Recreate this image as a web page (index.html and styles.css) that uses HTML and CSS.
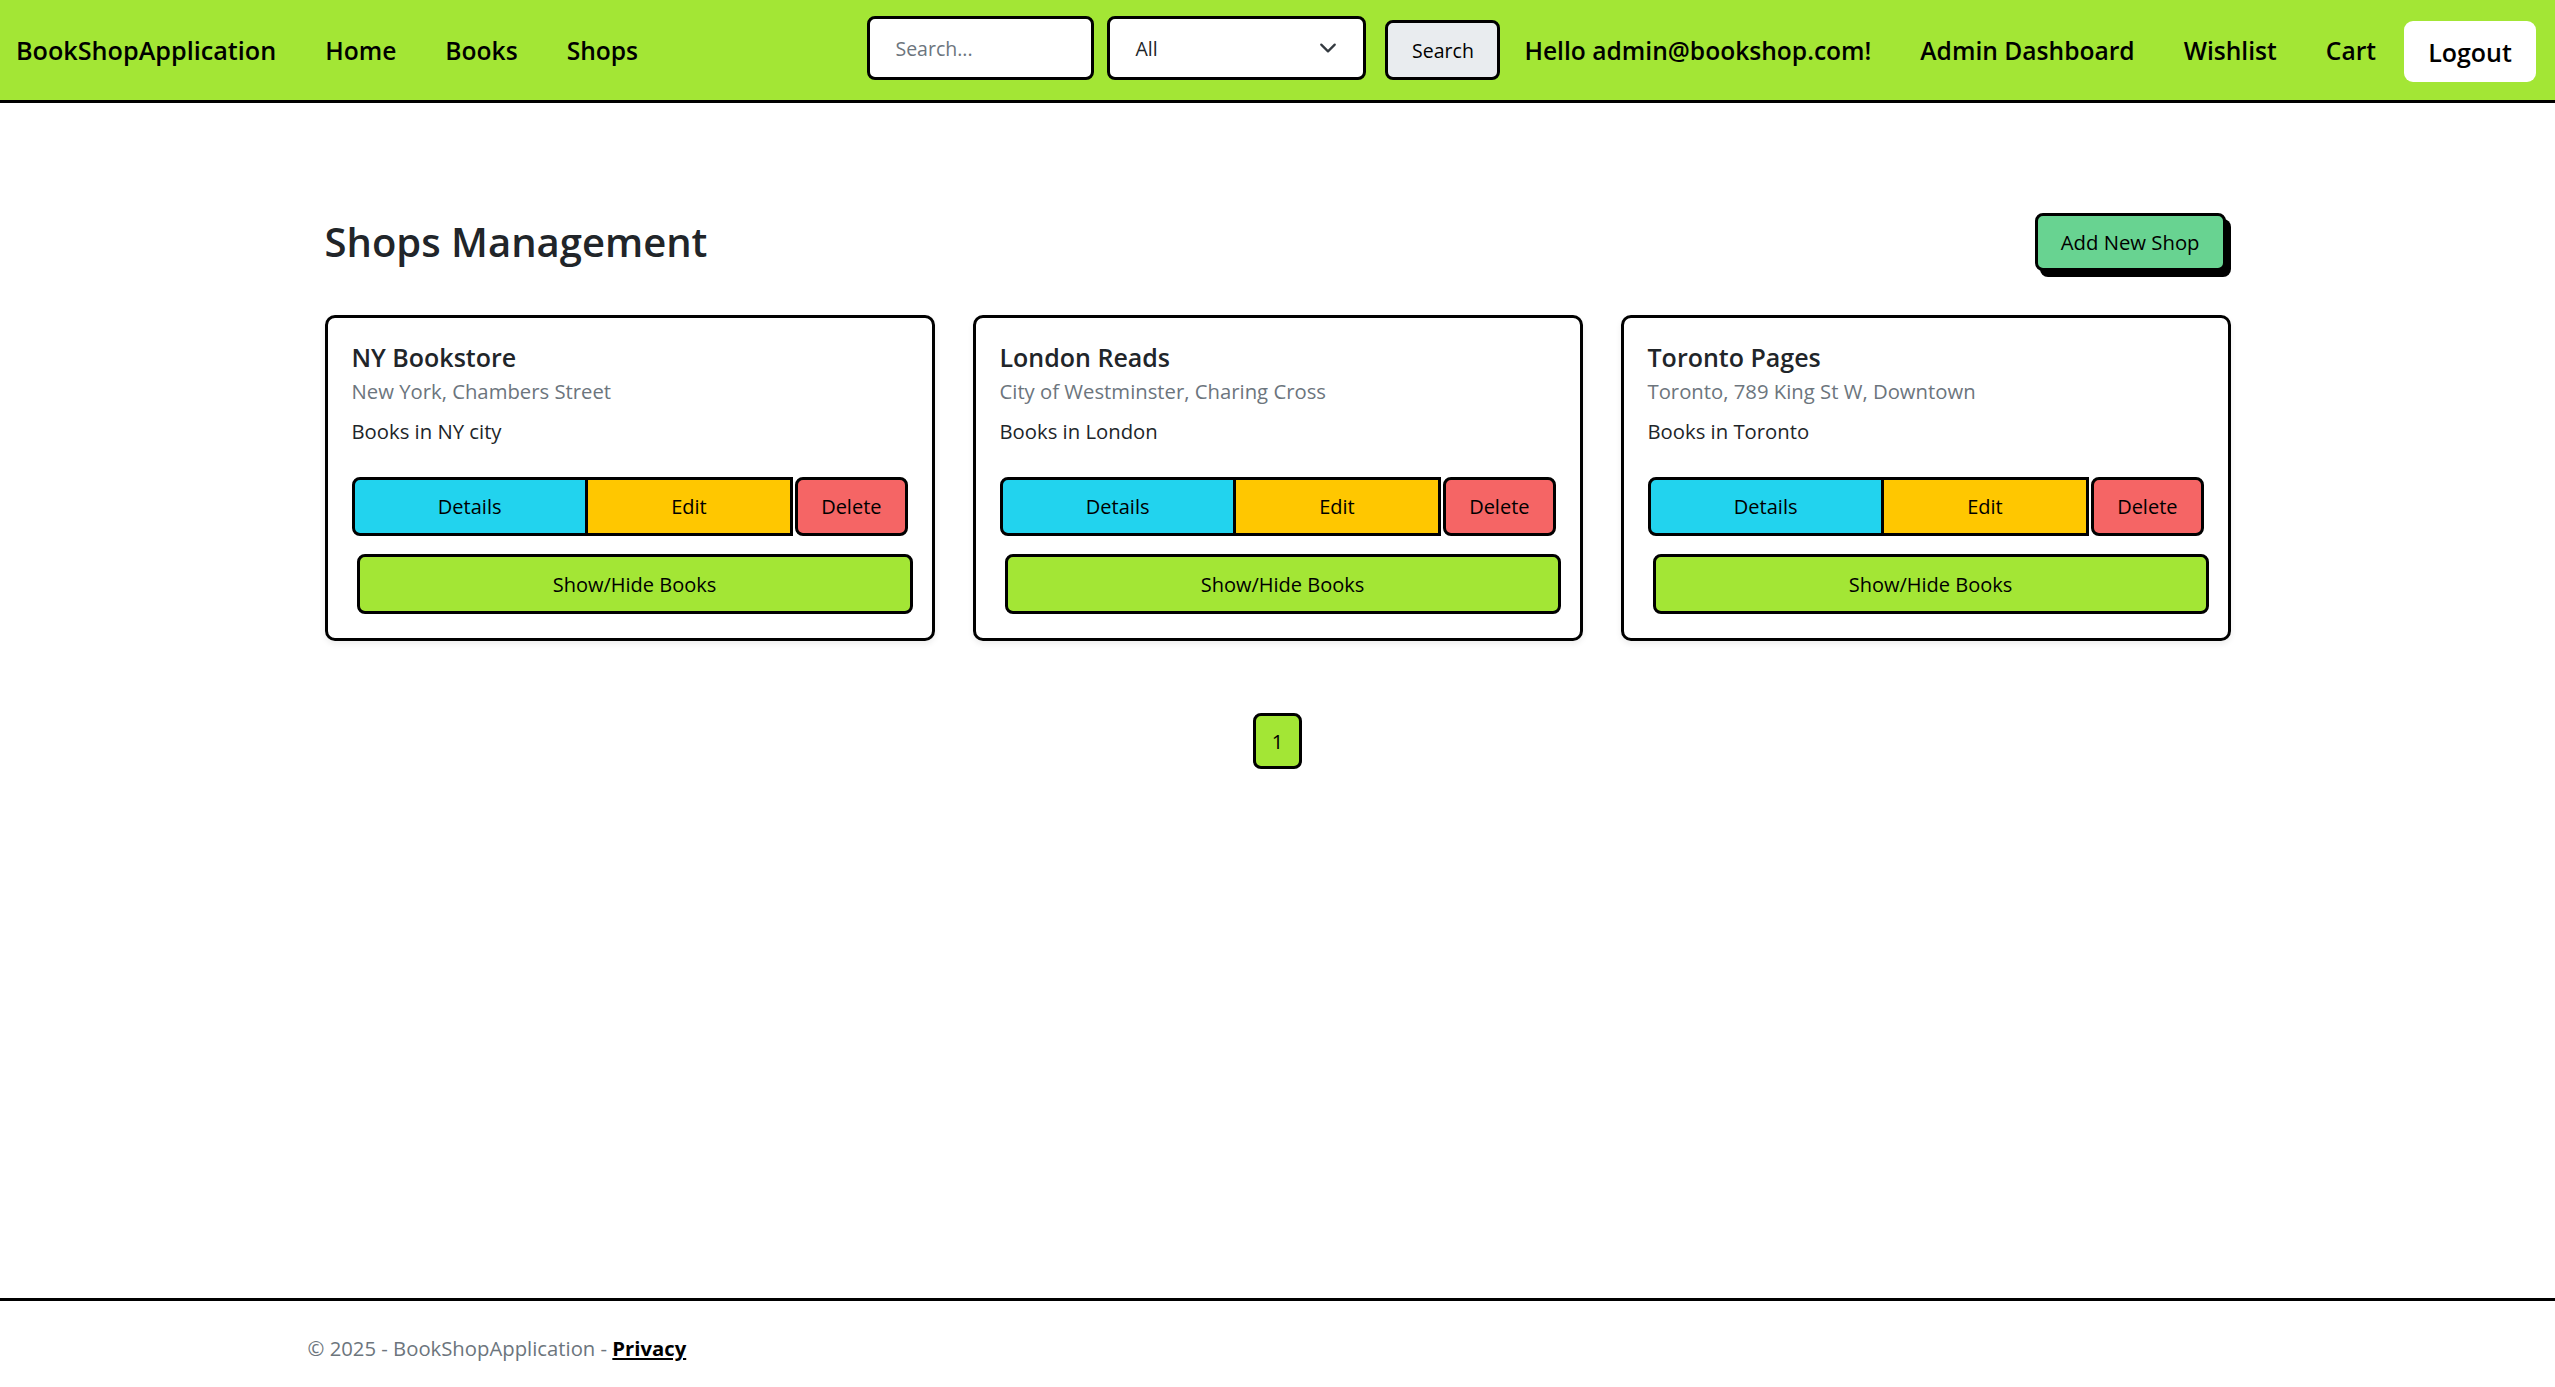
FILE: index.html
```html
<!DOCTYPE html>
<html lang="en">
<head>
<meta charset="utf-8">
<title>Shops Management - BookShopApplication</title>
<link rel="stylesheet" href="styles.css">
</head>
<body>
<nav class="navbar">
  <a class="brand" href="#">BookShopApplication</a>
  <ul class="nav-left">
    <li><a class="nav-link" href="#">Home</a></li>
    <li><a class="nav-link" href="#">Books</a></li>
    <li><a class="nav-link" href="#">Shops</a></li>
  </ul>
  <form class="search">
    <input class="search-input" type="text" placeholder="Search...">
    <div class="select">
      <span>All</span>
      <svg class="chev" width="18" height="18" viewBox="0 0 16 16"><path d="M2 5l6 6 6-6" fill="none" stroke="#343a40" stroke-width="2" stroke-linecap="round" stroke-linejoin="round"/></svg>
    </div>
    <button class="search-btn" type="button">Search</button>
  </form>
  <ul class="nav-right">
    <li class="hello">Hello admin@bookshop.com!</li>
    <li><a class="nav-link" href="#">Admin Dashboard</a></li>
    <li><a class="nav-link" href="#">Wishlist</a></li>
    <li><a class="nav-link cart" href="#">Cart</a></li>
    <li><button class="logout" type="button">Logout</button></li>
  </ul>
</nav>

<main class="container">
  <div class="head-row">
    <h2 class="page-title">Shops Management</h2>
    <button class="add-btn" type="button">Add New Shop</button>
  </div>

  <div class="cards">
    <div class="card">
      <h5 class="card-title">NY Bookstore</h5>
      <h6 class="card-subtitle">New York, Chambers Street</h6>
      <p class="card-text">Books in NY city</p>
      <div class="btn-group">
        <button class="btn btn-details" type="button">Details</button>
        <button class="btn btn-edit" type="button">Edit</button>
        <form class="del-form"><button class="btn btn-delete" type="button">Delete</button></form>
      </div>
      <button class="btn btn-toggle" type="button">Show/Hide Books</button>
    </div>
    <div class="card">
      <h5 class="card-title">London Reads</h5>
      <h6 class="card-subtitle">City of Westminster, Charing Cross</h6>
      <p class="card-text">Books in London</p>
      <div class="btn-group">
        <button class="btn btn-details" type="button">Details</button>
        <button class="btn btn-edit" type="button">Edit</button>
        <form class="del-form"><button class="btn btn-delete" type="button">Delete</button></form>
      </div>
      <button class="btn btn-toggle" type="button">Show/Hide Books</button>
    </div>
    <div class="card">
      <h5 class="card-title">Toronto Pages</h5>
      <h6 class="card-subtitle">Toronto, 789 King St W, Downtown</h6>
      <p class="card-text">Books in Toronto</p>
      <div class="btn-group">
        <button class="btn btn-details" type="button">Details</button>
        <button class="btn btn-edit" type="button">Edit</button>
        <form class="del-form"><button class="btn btn-delete" type="button">Delete</button></form>
      </div>
      <button class="btn btn-toggle" type="button">Show/Hide Books</button>
    </div>
  </div>

  <div class="pagination">
    <a class="page" href="#">1</a>
  </div>
</main>

<footer class="footer">
  <div class="footer-inner">&copy; 2025 - BookShopApplication - <a class="privacy" href="#">Privacy</a></div>
</footer>
</body>
</html>
```

FILE: styles.css
```css
* { box-sizing: border-box; }

body {
  margin: 0;
  min-height: 100vh;
  display: flex;
  flex-direction: column;
  font-family: "Open Sans", "Liberation Sans", sans-serif;
  font-size: 20.3px;
  color: #212529;
  background: #fff;
}

/* ---------- navbar ---------- */
.navbar {
  height: 103px;
  flex: none;
  background: #a3e635;
  border-bottom: 3px solid #000;
  display: flex;
  align-items: center;
  padding: 0 19px 0 16px;
}

.brand {
  font-size: 25.2px;
  font-weight: 600;
  color: #000;
  text-decoration: none;
}

.nav-left,
.nav-right {
  list-style: none;
  margin: 0;
  padding: 0;
  display: flex;
  align-items: center;
}

.nav-left {
  flex: 1;
  gap: 49px;
  margin-left: 49px;
}

.nav-link,
.hello {
  font-size: 24.6px;
  font-weight: 600;
  color: #000;
  text-decoration: none;
}

.search {
  display: flex;
  align-items: center;
}

.search-input {
  width: 227px;
  height: 64px;
  margin-bottom: 4px;
  border: 3px solid #000;
  border-radius: 8px;
  padding: 0 25px;
  font-family: "Open Sans", sans-serif;
  font-size: 19.5px;
  color: #212529;
  background: #fff;
  outline: none;
}

.search-input::placeholder {
  color: #6c757d;
}

.select {
  width: 259px;
  height: 64px;
  margin: 0 0 4px 13px;
  border: 3px solid #000;
  border-radius: 8px;
  background: #fff;
  display: flex;
  align-items: center;
  justify-content: space-between;
  padding: 0 26px 0 25px;
  font-size: 19.5px;
  color: #212529;
}

.chev {
  display: block;
}

.search-btn {
  width: 115px;
  height: 60px;
  margin-left: 19px;
  border: 3px solid #000;
  border-radius: 8px;
  background: #e9ecef;
  font-family: "Open Sans", sans-serif;
  font-size: 19.5px;
  color: #000;
  padding: 0;
}

.nav-right {
  margin-left: 24px;
  gap: 49px;
}

.logout {
  margin-left: -21px;
  width: 132px;
  height: 61px;
  margin-top: 3px;
  border: 0;
  border-radius: 9px;
  background: #fff;
  font-family: "Open Sans", sans-serif;
  font-size: 25px;
  font-weight: 600;
  color: #000;
  padding: 0;
}

/* ---------- main ---------- */
.container {
  width: 1906px;
  margin: 0 auto;
  flex: 1;
  padding-top: 110px;
}

.head-row {
  display: flex;
  align-items: center;
  justify-content: space-between;
  height: 58px;
}

.page-title {
  margin: 0;
  font-size: 40px;
  font-weight: 600;
  line-height: 1.2;
  color: #212529;
}

.add-btn {
  height: 58px;
  margin-right: 5px;
  padding: 0 23px;
  border: 3px solid #000;
  border-radius: 8px;
  background: #68d391;
  box-shadow: 5px 6px 0 #000;
  font-family: "Open Sans", sans-serif;
  font-size: 20.3px;
  color: #000;
}

.cards {
  margin-top: 44px;
  display: grid;
  grid-template-columns: repeat(3, 1fr);
  gap: 38px;
}

.card {
  border: 3px solid #000;
  border-radius: 10px;
  padding: 24px;
  background: #fff;
  box-shadow: 0 3px 6px rgba(0, 0, 0, 0.07);
}

.card-title {
  margin: 0;
  font-size: 25px;
  font-weight: 600;
  line-height: 30px;
  color: #212529;
}

.card-subtitle {
  margin: 7px 0 0;
  font-size: 20.3px;
  font-weight: 400;
  line-height: 24px;
  color: #6c757d;
}

.card-text {
  margin: 13px 0 0;
  font-size: 20.3px;
  line-height: 30px;
}

.btn-group {
  margin-top: 31px;
  display: flex;
}

.btn {
  height: 59px;
  border: 3px solid #000;
  border-radius: 8px;
  font-family: "Open Sans", sans-serif;
  font-size: 20px;
  color: #000;
  padding: 0 23px;
}

.btn-details {
  flex: 1 1 auto;
  background: #22d3ee;
  border-radius: 8px 0 0 8px;
}

.btn-edit {
  flex: 1 1 auto;
  margin-left: -3px;
  background: #ffc700;
  border-radius: 0;
}

.del-form {
  margin: 0 0 0 2px;
  display: flex;
}

.btn-delete {
  background: #f56565;
}

.btn-toggle {
  display: block;
  width: 100%;
  height: 60px;
  margin: 18px -5px 0 5px;
  background: #a3e635;
}

.pagination {
  margin-top: 72px;
  display: flex;
  justify-content: center;
}

.page {
  width: 49px;
  height: 56px;
  border: 3px solid #000;
  border-radius: 8px;
  background: #a3e635;
  display: flex;
  align-items: center;
  justify-content: center;
  font-size: 20px;
  color: #000;
  text-decoration: none;
}

/* ---------- footer ---------- */
.footer {
  flex: none;
  border-top: 3px solid #000;
  padding-top: 8px;
  line-height: 78px;
  white-space: nowrap;
}

.footer-inner {
  width: 1940px;
  margin: 0 auto;
  font-size: 20.3px;
  color: #6c757d;
}

.privacy {
  color: #000;
  font-weight: 700;
  text-decoration: underline;
}
```
